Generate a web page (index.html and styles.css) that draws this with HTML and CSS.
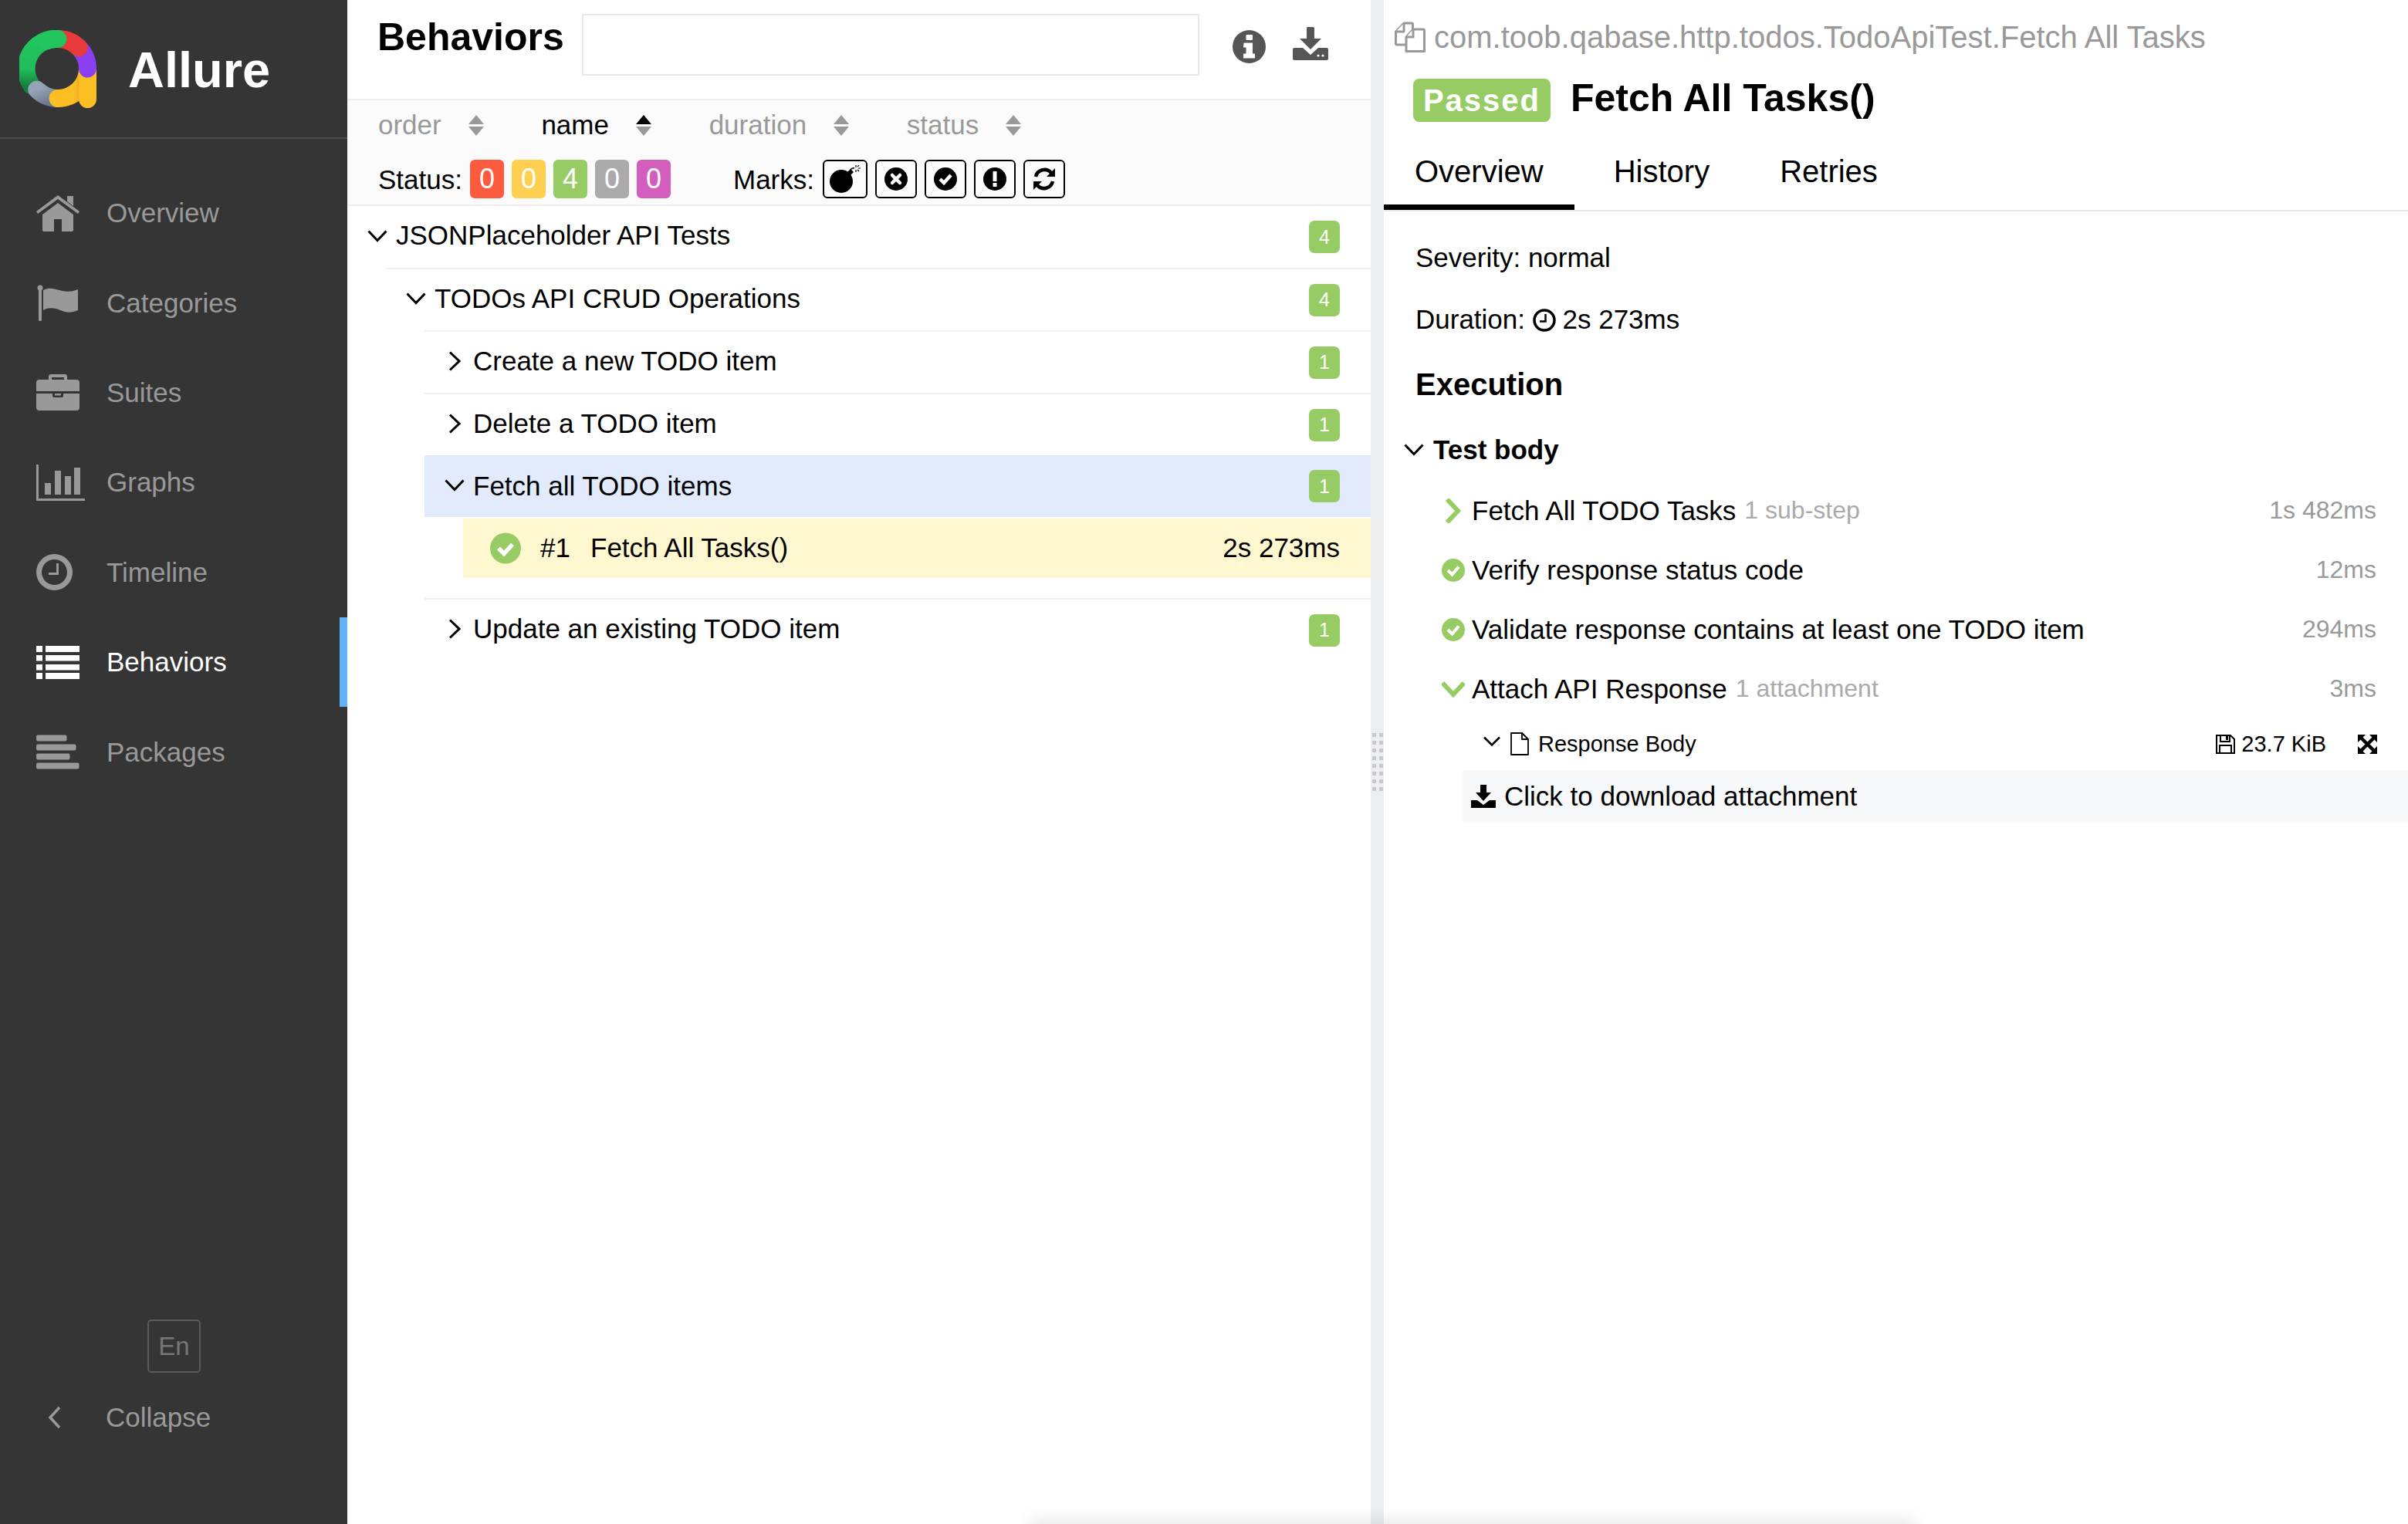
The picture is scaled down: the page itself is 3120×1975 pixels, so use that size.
FILE: index.html
```html
<!DOCTYPE html>
<html lang="en">
<head>
    <meta charset="UTF-8">
    <title>Allure Report</title>
    <link rel="stylesheet" href="styles.css">
</head>
<body>
    <aside class="side-nav">
        <div class="brand">
            <svg class="brand-logo" viewBox="0 0 100 102" fill="none" stroke-width="23" stroke-linecap="round">
                <defs>
                    <linearGradient id="logo-green" x1="0" y1="0" x2="0" y2="1">
                        <stop offset="0" stop-color="#22c55e"/>
                        <stop offset="0.65" stop-color="#20bd5a"/>
                        <stop offset="1" stop-color="#14803f"/>
                    </linearGradient>
                    <linearGradient id="logo-grey" x1="0" y1="0" x2="1" y2="1">
                        <stop offset="0" stop-color="#94a3b8"/>
                        <stop offset="1" stop-color="#6d7a8f"/>
                    </linearGradient>
                    <linearGradient id="logo-yellow" x1="0" y1="0" x2="1" y2="0">
                        <stop offset="0" stop-color="#fbbf24"/>
                        <stop offset="0.55" stop-color="#fbbf24"/>
                        <stop offset="1" stop-color="#d98c12"/>
                    </linearGradient>
                </defs>
                <path stroke="url(#logo-green)" d="M16 72A38.5 38.5 0 0 1 50 11.5"/>
                <path stroke="url(#logo-grey)" d="M22.8 77.2A38.5 38.5 0 0 0 50 88.5"/>
                <path stroke="url(#logo-yellow)" d="M50 88.5A38.5 38.5 0 0 0 88.5 50"/>
                <path stroke="#fbbf24" d="M88.5 52V89.5"/>
                <path stroke="#8b3ff2" d="M77.2 22.8A38.5 38.5 0 0 1 88.5 50"/>
                <path stroke="#e83a3a" d="M50 11.5A38.5 38.5 0 0 1 77.2 22.8"/>
                <path stroke="#22c55e" d="M36 13.5A38.5 38.5 0 0 1 50 11.5"/>
            </svg>
            <span class="brand-name">Allure</span>
        </div>
        <nav class="nav-list">
            <a class="nav-item">
                <svg class="nav-icon" viewBox="0 0 56 47" fill="currentColor"><path d="M40 1h8v13l-8-6z"/><path d="M28 0 56 21l-2 3L28 5 2 24l-2-3z"/><path d="M8 25 28 10l20 15v20a2 2 0 0 1-2 2H33V31H23v16H10a2 2 0 0 1-2-2z"/></svg>
                <span>Overview</span>
            </a>
            <a class="nav-item">
                <svg class="nav-icon" viewBox="0 0 56 47" fill="currentColor"><circle cx="5" cy="4" r="3.5"/><rect x="3" y="4" width="4" height="43" rx="1.5"/><path d="M9 7c7-4 14-2 21 0s14 3 24-1v27c-9 4-16 3-23 0s-15-4-22 0z"/></svg>
                <span>Categories</span>
            </a>
            <a class="nav-item">
                <svg class="nav-icon" viewBox="0 0 56 47" fill="currentColor"><path d="M16 7V3a3 3 0 0 1 3-3h18a3 3 0 0 1 3 3v4h-4V4H20v3z"/><path d="M4 7h48a4 4 0 0 1 4 4v11H0V11a4 4 0 0 1 4-4z"/><path d="M0 25h21v3a2 2 0 0 0 2 2h10a2 2 0 0 0 2-2v-3h21v18a4 4 0 0 1-4 4H4a4 4 0 0 1-4-4z"/><rect x="24" y="25" width="8" height="2.500"/></svg>
                <span>Suites</span>
            </a>
            <a class="nav-item">
                <svg class="nav-icon nav-icon-wide" viewBox="0 0 63 47" fill="currentColor"><path d="M0 0h3v44h60v3H0z"/><rect x="11" y="24" width="8" height="15"/><rect x="24" y="8" width="8" height="31"/><rect x="37" y="15" width="8" height="24"/><rect x="49" y="4" width="8" height="35"/></svg>
                <span>Graphs</span>
            </a>
            <a class="nav-item">
                <svg class="nav-icon" viewBox="0 0 56 47" fill="currentColor"><path fill-rule="evenodd" d="M23.500 0a23.500 23.500 0 1 1 0 47 23.500 23.500 0 0 1 0-47zm0 7a16.500 16.500 0 1 0 0 33 16.500 16.500 0 0 0 0-33z"/><path d="M26 12h3v15H16v-3h10z"/></svg>
                <span>Timeline</span>
            </a>
            <a class="nav-item active">
                <svg class="nav-icon" viewBox="0 0 56 43" fill="currentColor"><rect width="8" height="8"/><rect x="12" width="44" height="8"/><rect y="12" width="8" height="7.500"/><rect x="12" y="12" width="44" height="7.500"/><rect y="24" width="8" height="7.500"/><rect x="12" y="24" width="44" height="7.500"/><rect y="35" width="8" height="8"/><rect x="12" y="35" width="44" height="8"/></svg>
                <span>Behaviors</span>
            </a>
            <a class="nav-item">
                <svg class="nav-icon" viewBox="0 0 56 44" fill="currentColor"><rect width="39.500" height="8" rx="2"/><rect y="12" width="51.500" height="8" rx="2"/><rect y="24" width="43.500" height="8" rx="2"/><rect y="36" width="55.500" height="8" rx="2"/></svg>
                <span>Packages</span>
            </a>
        </nav>
        <div class="side-foot">
            <div class="lang-box">En</div>
            <a class="collapse-link">
                <svg class="collapse-icon" viewBox="0 0 17 30" fill="none" stroke="currentColor" stroke-width="3.500"><path d="M15 2 3 15l12 13"/></svg>
                <span>Collapse</span>
            </a>
        </div>
    </aside>

    <main class="tree-pane">
        <header class="pane-head">
            <h1 class="pane-title">Behaviors</h1>
            <div class="search-box"></div>
            <svg class="head-info" viewBox="0 0 43 43"><circle cx="21.500" cy="21.500" r="21.500" fill="#555"/><rect x="17.500" y="6" width="8.500" height="7" rx="1" fill="#fff"/><path fill="#fff" d="M14.500 16.500h11.500v14h3v6h-15v-6h3.500v-8h-3.500z"/></svg>
            <svg class="head-download" viewBox="0 0 46 43" fill="#555"><rect x="18" width="10" height="17" rx="1.500"/><path d="M9 15h28L23 29z"/><path d="M2 27h11l10 9 10-9h11a2 2 0 0 1 2 2v12a2 2 0 0 1-2 2H2a2 2 0 0 1-2-2V29a2 2 0 0 1 2-2z"/><circle cx="33" cy="37" r="1.600" fill="#fff"/><circle cx="39" cy="37" r="1.600" fill="#fff"/></svg>
        </header>
        <section class="filters">
            <div class="sort-row">
                <div class="sort-item">order<span class="sort-caret"><i class="up"></i><i class="down"></i></span></div>
                <div class="sort-item current">name<span class="sort-caret"><i class="up"></i><i class="down"></i></span></div>
                <div class="sort-item">duration<span class="sort-caret"><i class="up"></i><i class="down"></i></span></div>
                <div class="sort-item">status<span class="sort-caret"><i class="up"></i><i class="down"></i></span></div>
            </div>
            <div class="status-row">
                <span class="filter-label">Status:</span>
                <div class="stat-list">
                    <span class="stat failed">0</span>
                    <span class="stat broken">0</span>
                    <span class="stat passed">4</span>
                    <span class="stat skipped">0</span>
                    <span class="stat unknown">0</span>
                </div>
                <span class="filter-label marks-label">Marks:</span>
                <div class="mark-list">
                    <span class="mark mark-wide"><svg viewBox="0 0 40 36"><circle cx="15" cy="21" r="15" fill="#000"/><path d="m23 9 4-4 4 4-4 4z" fill="#000"/><path d="M27 6q2-3 5-2" fill="none" stroke="#000" stroke-width="1.500"/><path d="M34 0v3M34 6v3M30 4h1M37 4h3M36 2l2-2M36 6l2 2" stroke="#000" stroke-width="1.200"/></svg></span>
                    <span class="mark"><svg viewBox="0 0 30 30"><circle cx="15" cy="15" r="15" fill="#000"/><path d="m10 10 10 10m0-10L10 20" stroke="#fff" stroke-width="4.500" stroke-linecap="round"/></svg></span>
                    <span class="mark"><svg viewBox="0 0 30 30"><circle cx="15" cy="15" r="15" fill="#000"/><path d="m8 15 5 5 9-10" fill="none" stroke="#fff" stroke-width="4.500"/></svg></span>
                    <span class="mark"><svg viewBox="0 0 30 30"><circle cx="15" cy="15" r="15" fill="#000"/><rect x="12.500" y="5" width="5" height="13" fill="#fff"/><rect x="12.500" y="20" width="5" height="5" fill="#fff"/></svg></span>
                    <span class="mark"><svg viewBox="0 0 30 30"><path d="M4 12A11.500 11.500 0 0 1 24 7" fill="none" stroke="#000" stroke-width="4.500"/><path d="M29 1v11H18z"/><path d="M26 18A11.500 11.500 0 0 1 6 23" fill="none" stroke="#000" stroke-width="4.500"/><path d="M1 29V18h11z"/></svg></span>
                </div>
            </div>
        </section>

        <div class="tree">
            <div class="tree-row">
                <span class="arrow"><svg viewBox="0 0 26 16"><path d="m1.500 1.500 11.500 12 11.500-12" /></svg></span>
                <span class="tree-name">JSONPlaceholder API Tests</span>
                <span class="count">4</span>
            </div>
            <div class="tree-children">
                <div class="tree-row bordered">
                    <span class="arrow"><svg viewBox="0 0 26 16"><path d="m1.500 1.500 11.500 12 11.500-12" /></svg></span>
                    <span class="tree-name">TODOs API CRUD Operations</span>
                    <span class="count">4</span>
                </div>
                <div class="tree-children">
                    <div class="tree-row bordered">
                        <span class="arrow"><svg class="arrow-right" viewBox="0 0 16 26"><path d="m2 1.500 12 11.500-12 11.500" /></svg></span>
                        <span class="tree-name">Create a new TODO item</span>
                        <span class="count">1</span>
                    </div>
                    <div class="tree-row bordered">
                        <span class="arrow"><svg class="arrow-right" viewBox="0 0 16 26"><path d="m2 1.500 12 11.500-12 11.500" /></svg></span>
                        <span class="tree-name">Delete a TODO item</span>
                        <span class="count">1</span>
                    </div>
                    <div class="tree-row selected">
                        <span class="arrow"><svg viewBox="0 0 26 16"><path d="m1.500 1.500 11.500 12 11.500-12" /></svg></span>
                        <span class="tree-name">Fetch all TODO items</span>
                        <span class="count">1</span>
                    </div>
                    <div class="test-row">
                        <svg class="test-check" viewBox="0 0 40 40"><circle cx="20" cy="20" r="20" fill="#97cc64"/><path d="m11 20 7 7 11-12" fill="none" stroke="#fff" stroke-width="5.500"/></svg>
                        <span class="test-num">#1</span>
                        <span class="test-title-text">Fetch All Tasks()</span>
                        <span class="test-time">2s 273ms</span>
                    </div>
                    <div class="tree-row bordered">
                        <span class="arrow"><svg class="arrow-right" viewBox="0 0 16 26"><path d="m2 1.500 12 11.500-12 11.500" /></svg></span>
                        <span class="tree-name">Update an existing TODO item</span>
                        <span class="count">1</span>
                    </div>
                </div>
            </div>
        </div>
    </main>

    <div class="gutter"><div class="grip"></div></div>

    <section class="detail-pane">
        <div class="full-name">
            <svg class="copy-icon" viewBox="0 0 40 40" fill="#fff" stroke="#999" stroke-width="3" stroke-linejoin="round"><path d="M15 30H3a1.500 1.500 0 0 1-1.500-1.500V13L12 2h10a1.500 1.500 0 0 1 1.500 1.500V10"/><path d="M1.500 13H12V2"/><path d="M15 38.500V20l9-10h13a1.500 1.500 0 0 1 1.500 1.500v27h-23.500z"/><path d="M15 20h9v-10"/></svg>
            <span>com.toob.qabase.http.todos.TodoApiTest.Fetch All Tasks</span>
        </div>
        <div class="test-title">
            <span class="status-tag">Passed</span>
            <h2>Fetch All Tasks()</h2>
        </div>
        <div class="tabs">
            <a class="tab active">Overview</a>
            <a class="tab">History</a>
            <a class="tab">Retries</a>
        </div>
        <div class="overview">
            <p class="meta">Severity: normal</p>
            <p class="meta">Duration:
                <svg class="clock" viewBox="0 0 30 30"><circle cx="15" cy="15" r="13" fill="none" stroke="#000" stroke-width="3.500"/><path d="M16.500 7v9.500H9" fill="none" stroke="#000" stroke-width="2.500"/></svg>
                2s 273ms</p>
            <h3 class="exec-title">Execution</h3>
            <div class="stage">
                <svg class="stage-arrow" viewBox="0 0 26 16" fill="none" stroke="#000" stroke-width="3"><path d="m1.500 1.500 11.500 12 11.500-12"/></svg>
                <b>Test body</b>
            </div>
            <div class="step">
                <svg class="step-icon" viewBox="0 0 30 32"><path d="m7 1 14 15-14 15" fill="none" stroke="#97cc64" stroke-width="6"/></svg>
                <span class="step-name">Fetch All TODO Tasks</span>
                <span class="step-extra">1 sub-step</span>
                <span class="step-time">1s 482ms</span>
            </div>
            <div class="step">
                <svg class="step-icon" viewBox="0 0 30 30"><circle cx="15" cy="15" r="15" fill="#97cc64"/><path d="m8 15 5.500 5.500 8.500-10" fill="none" stroke="#fff" stroke-width="4"/></svg>
                <span class="step-name">Verify response status code</span>
                <span class="step-time">12ms</span>
            </div>
            <div class="step">
                <svg class="step-icon" viewBox="0 0 30 30"><circle cx="15" cy="15" r="15" fill="#97cc64"/><path d="m8 15 5.500 5.500 8.500-10" fill="none" stroke="#fff" stroke-width="4"/></svg>
                <span class="step-name">Validate response contains at least one TODO item</span>
                <span class="step-time">294ms</span>
            </div>
            <div class="step">
                <svg class="step-icon" viewBox="0 0 30 22"><path d="m1 3 14 15 14-15" fill="none" stroke="#97cc64" stroke-width="6"/></svg>
                <span class="step-name">Attach API Response</span>
                <span class="step-extra">1 attachment</span>
                <span class="step-time">3ms</span>
            </div>
            <div class="attachment">
                <svg class="attach-arrow" viewBox="0 0 22 14" fill="none" stroke="#000" stroke-width="2.500"><path d="m1 1.500 10 10 10-10"/></svg>
                <svg class="file-icon" viewBox="0 0 26 30" fill="none" stroke="#000" stroke-width="1.800" stroke-linejoin="round"><path d="M2 1h14l8 8v20H2z"/><path d="M16 1v8h8"/></svg>
                <span class="attach-name">Response Body</span>
                <svg class="save-icon" viewBox="0 0 25 25" fill="none" stroke="#000" stroke-width="2"><path d="M1 1h18l5 5v18H1z"/><path d="M6 1v8h12V1"/><path d="M5 24V14h15v10"/><rect x="13" y="2" width="3" height="5" fill="#000" stroke="none"/></svg>
                <span class="attach-size">23.7 KiB</span>
                <svg class="expand-icon" viewBox="0 0 25 25"><path d="M0 0h10L0 10zM25 0v10L15 0zM0 25V15l10 10zM25 25H15l10-10z"/><path d="m4 4 17 17M21 4 4 21" stroke="#000" stroke-width="4.500"/></svg>
            </div>
            <div class="attach-download">
                <svg class="small-download" viewBox="0 0 32 30" fill="#000"><rect x="12" width="8" height="13"/><path d="M6 10h20L16 21z"/><path d="M0 20h8l8 6 8-6h8v10H0z"/></svg>
                <span>Click to download attachment</span>
            </div>
        </div>
    </section>

    <div class="bottom-shade"></div>
</body>
</html>
```
FILE: styles.css
```css
* {
    box-sizing: border-box;
}

body {
    margin: 0;
    height: 1975px;
    display: flex;
    overflow: hidden;
    position: relative;
    background-color: #fff;
    color: #000;
    font-family: "Liberation Sans", Arial, sans-serif;
    font-size: 35px;
}

/* sidebar */
.side-nav {
    width: 450px;
    flex-shrink: 0;
    display: flex;
    flex-direction: column;
    background-color: #353535;
    color: #999;
}

.brand {
    height: 180px;
    flex-shrink: 0;
    display: flex;
    align-items: center;
    gap: 41px;
    padding: 2px 0 0 25px;
    border-bottom: 2px solid #4d4d4d;
}

.brand-logo {
    width: 100px;
    height: 102px;
}

.brand-name {
    color: #fff;
    font-size: 65px;
    font-weight: bold;
}

.nav-list {
    padding-top: 38px;
}

.nav-item {
    height: 116.4px;
    display: flex;
    align-items: center;
    padding-left: 47px;
    gap: 35px;
    border-right: 10px solid transparent;
}

.nav-item.active {
    color: #fff;
    border-right-color: #5fb3f6;
}

.nav-icon {
    width: 56px;
    height: 47px;
    flex-shrink: 0;
}

.nav-icon-wide {
    width: 63px;
    margin-right: -7px;
}

.side-foot {
    margin-top: auto;
    padding-bottom: 118px;
}

.lang-box {
    width: 69px;
    height: 69px;
    margin-left: 191px;
    display: flex;
    align-items: center;
    justify-content: center;
    border: 2px solid #5a5a5a;
    border-radius: 5px;
    color: #777;
    font-size: 33px;
}

.collapse-link {
    display: flex;
    align-items: center;
    gap: 58px;
    margin-top: 38px;
    padding-left: 62px;
}

.collapse-icon {
    width: 17px;
    height: 30px;
}

/* middle pane */
.tree-pane {
    width: 1326px;
    flex-shrink: 0;
}

.pane-head {
    height: 130px;
    display: flex;
    align-items: flex-start;
    padding-left: 39px;
    border-bottom: 2px solid #eee;
}

.pane-title {
    width: 265px;
    margin: 18px 0 0;
    font-size: 50px;
    line-height: 60px;
}

.search-box {
    width: 800px;
    height: 80px;
    margin-top: 18px;
    border: 2px solid #e8e8e8;
}

.head-info {
    width: 43px;
    height: 43px;
    margin: 39px 0 0 43px;
}

.head-download {
    width: 46px;
    height: 43px;
    margin: 35px 0 0 35px;
}

.filters {
    height: 137px;
    background-color: #fbfbfb;
    border-bottom: 2px solid #eee;
    padding-left: 40px;
}

.sort-row {
    display: flex;
    gap: 74.7px;
    height: 64px;
    padding-top: 10px;
    color: #999;
}

.sort-item {
    display: flex;
    align-items: center;
    height: 44px;
}

.sort-item.current {
    color: #000;
}

.sort-caret {
    width: 20px;
    margin-left: 35px;
    display: flex;
    flex-direction: column;
    gap: 3px;
}

.sort-caret i {
    display: block;
    border-left: 10px solid transparent;
    border-right: 10px solid transparent;
}

.sort-caret .up {
    border-bottom: 12px solid #999;
}

.sort-caret .down {
    border-top: 12px solid #999;
}

.current .up {
    border-bottom-color: #000;
}

.status-row {
    display: flex;
    align-items: center;
    height: 50px;
    margin-top: 13px;
}

.filter-label {
    width: 119px;
    padding-top: 2px;
}

.marks-label {
    width: 116px;
    margin-left: 81px;
}

.stat-list,
.mark-list {
    display: flex;
    gap: 10px;
}

.stat {
    width: 44px;
    height: 50px;
    display: flex;
    align-items: center;
    justify-content: center;
    border-radius: 6px;
    color: #fff;
    font-size: 36px;
}

.failed { background-color: #fd5a3e; }
.broken { background-color: #ffd050; }
.passed { background-color: #97cc64; }
.skipped { background-color: #aaa; }
.unknown { background-color: #d35ebe; }

.mark {
    width: 54px;
    height: 50px;
    display: flex;
    align-items: center;
    justify-content: center;
    border: 2px solid #000;
    border-radius: 6px;
}

.mark-wide {
    width: 58px;
}

.mark svg {
    width: 30px;
    height: 30px;
}

.mark-wide svg {
    width: 40px;
    height: 36px;
}

/* tree */
.tree-row {
    height: 80px;
    display: flex;
    align-items: center;
    padding: 0 40px 0 26px;
}

.tree-row.bordered {
    height: 81px;
    border-top: 2px solid #f0f0f0;
}

.tree-children {
    margin-left: 50px;
}

.arrow {
    width: 26px;
    margin-right: 11px;
    padding-bottom: 3px;
    display: flex;
    justify-content: center;
}

.arrow svg {
    width: 26px;
    height: 16px;
    fill: none;
    stroke: #000;
    stroke-width: 3;
}

.arrow .arrow-right {
    width: 16px;
    height: 26px;
}

.tree-name {
    padding-bottom: 4px;
}

.count {
    width: 40px;
    height: 42px;
    margin-left: auto;
    display: flex;
    align-items: center;
    justify-content: center;
    border-radius: 7px;
    background-color: #97cc64;
    color: #fff;
    font-size: 25px;
}

.tree-row.selected {
    background-color: #e1ebfb;
}

.selected .tree-name {
    padding-bottom: 1px;
}

.test-row {
    height: 77px;
    display: flex;
    align-items: center;
    margin: 2px 0 26px 50px;
    padding: 0 40px 1px 35px;
    background-color: #fef7cf;
}

.test-check {
    width: 40px;
    height: 41px;
    margin-right: 25px;
}

.test-num {
    width: 65px;
}

.test-time {
    margin-left: auto;
}

/* splitter */
.gutter {
    width: 17px;
    flex-shrink: 0;
    display: flex;
    align-items: center;
    justify-content: center;
    background-color: #eceef1;
}

.grip {
    width: 14px;
    height: 75px;
    background-image:
        linear-gradient(#c9c9c9 5px, transparent 5px),
        linear-gradient(#c9c9c9 5px, transparent 5px);
    background-size: 5px 10px;
    background-position: 0 0, 9px 0;
    background-repeat: repeat-y;
}

/* right pane */
.detail-pane {
    flex: 1;
    min-width: 0;
}

.full-name {
    height: 96px;
    display: flex;
    align-items: center;
    gap: 11px;
    padding-left: 14px;
    color: #999;
    font-size: 40px;
}

.copy-icon {
    width: 40px;
    height: 40px;
}

.test-title {
    height: 68px;
    display: flex;
    align-items: center;
    padding-left: 38px;
    gap: 26px;
}

.status-tag {
    width: 178px;
    height: 56px;
    display: flex;
    align-items: center;
    justify-content: center;
    border-radius: 8px;
    background-color: #97cc64;
    color: #fff;
    font-size: 40px;
    font-weight: bold;
    letter-spacing: 2px;
}

.test-title h2 {
    margin: 0;
    padding-bottom: 6px;
    font-size: 50px;
}

.tabs {
    height: 110px;
    display: flex;
    gap: 11px;
    padding-top: 28px;
    border-bottom: 2px solid #e8e8e8;
    font-size: 40px;
}

.tab {
    height: 80px;
    padding: 0 40px;
    line-height: 60px;
}

.tab.active {
    border-bottom: 7px solid #000;
}

.overview {
    padding-top: 40px;
}

.meta {
    height: 40px;
    margin: 0 0 40px 41px;
    line-height: 40px;
}

.clock {
    width: 30px;
    height: 30px;
    margin: 0 -1px 0 0;
    vertical-align: -4px;
}

.exec-title {
    margin: 0 0 0 41px;
    font-size: 40px;
    line-height: 48px;
}

.stage {
    height: 40px;
    display: flex;
    align-items: center;
    margin-top: 41px;
    padding-left: 26px;
    gap: 12px;
    line-height: 40px;
}

.stage-arrow {
    width: 26px;
    height: 16px;
}

.step {
    height: 77px;
    display: flex;
    align-items: center;
    padding: 0 41px 0 75px;
}

.stage + .step {
    margin-top: 20px;
}

.step-icon {
    width: 30px;
    flex-shrink: 0;
    margin-right: 9px;
}

.step-extra {
    margin-left: 11px;
    color: #aaa;
    font-size: 32px;
}

.step-time {
    margin-left: auto;
    color: #999;
    font-size: 32px;
}

.attachment {
    height: 40px;
    display: flex;
    align-items: center;
    margin-top: 13px;
    padding: 0 40px 0 129px;
    font-size: 29px;
}

.attach-arrow {
    width: 22px;
    height: 14px;
    margin-bottom: 6px;
}

.file-icon {
    width: 26px;
    height: 30px;
    margin-left: 12px;
}

.attach-name {
    margin-left: 11px;
}

.save-icon {
    width: 25px;
    height: 25px;
    margin-left: auto;
}

.attach-size {
    margin-left: 8px;
}

.expand-icon {
    width: 25px;
    height: 25px;
    margin-left: 41px;
}

.attach-download {
    height: 67px;
    display: flex;
    align-items: center;
    gap: 11px;
    margin: 14px 0 0 102px;
    padding-left: 11px;
    background-color: #f7f8fa;
}

.small-download {
    width: 32px;
    height: 30px;
}

/* faint window shadow along the bottom edge */
.bottom-shade {
    position: absolute;
    left: 1340px;
    right: 645px;
    bottom: -14px;
    height: 14px;
    box-shadow: 0 0 20px 6px rgba(0, 0, 0, 0.09);
}
```
